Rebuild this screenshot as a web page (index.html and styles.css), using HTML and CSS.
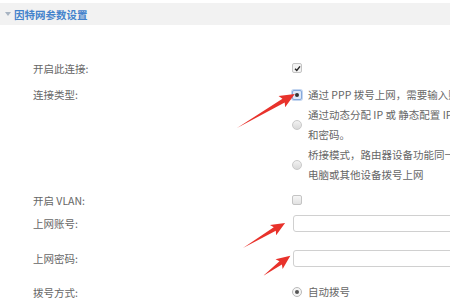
FILE: index.html
```html
<!DOCTYPE html>
<html>
<head>
    <meta charset="UTF-8">
    <title>因特网参数设置</title>
    <link rel="stylesheet" href="styles.css">
</head>
<body>
    <header class="section-head">
        <span class="caret"></span>
        <h2>因特网参数设置</h2>
    </header>
    <div class="form">
        <div class="row r-enable">
            <label class="lbl">开启此连接:</label>
            <div class="ctl">
                <span class="check checked">
                    <svg viewBox="0 0 10 10" width="7" height="7"><path d="M1.5 5.2 L4 7.8 L8.6 2" fill="none" stroke="#222" stroke-width="2"/></svg>
                </span>
            </div>
        </div>
        <div class="row r-type">
            <label class="lbl">连接类型:</label>
            <div class="ctl options">
                <div class="opt">
                    <span class="radio focus"><i></i></span>
                    <span class="opt-text">通过 PPP 拨号上网，需要输入账号和密码。</span>
                </div>
                <div class="opt">
                    <span class="radio"></span>
                    <span class="opt-text">通过动态分配 IP 或 静态配置 IP 地址的方式上网，不需要输入账号<br>和密码。</span>
                </div>
                <div class="opt">
                    <span class="radio"></span>
                    <span class="opt-text">桥接模式，路由器设备功能同一台交换机，需要在<br>电脑或其他设备拨号上网</span>
                </div>
            </div>
        </div>
        <div class="row r-vlan">
            <label class="lbl">开启 VLAN:</label>
            <div class="ctl"><span class="check"></span></div>
        </div>
        <div class="row r-user">
            <label class="lbl">上网账号:</label>
            <div class="ctl"><input class="field" type="text"></div>
        </div>
        <div class="row r-pass">
            <label class="lbl">上网密码:</label>
            <div class="ctl"><input class="field" type="password"></div>
        </div>
        <div class="row r-dial">
            <label class="lbl">拨号方式:</label>
            <div class="ctl opt">
                <span class="radio on"><i></i></span>
                <span class="opt-text">自动拨号</span>
            </div>
        </div>
    </div>
    <!-- annotation arrows drawn over the form -->
    <svg class="marks" width="450" height="300" viewBox="0 0 450 300">
        <g fill="#e8322b">
            <polygon transform="translate(237,128) rotate(-30.4)" points="0,0 54,-2.2 52,-6.5 67,0 52,6.5 54,2.2"/>
            <polygon transform="translate(243,248) rotate(-30.8)" points="0,0 37,-2 35,-6 49,0 35,6 37,2"/>
            <polygon transform="translate(263,276) rotate(-36.5)" points="0,0 22,-2 20,-6 34,0 20,6 22,2"/>
        </g>
    </svg>
</body>
</html>
```

FILE: styles.css
```css
body {
    margin: 0;
    width: 450px;
    height: 300px;
    overflow: hidden;
    position: relative;
    background: #fff;
    color: #666;
    font-family: "Noto Sans CJK SC", sans-serif;
    font-size: 10.5px;
}
.section-head {
    margin-top: 3px;
    height: 22px;
    background: #f2f2f2;
    display: flex;
    align-items: center;
    gap: 3px;
    padding-left: 5px;
}
.caret {
    width: 0;
    height: 0;
    border-left: 3px solid transparent;
    border-right: 3px solid transparent;
    border-top: 4px solid #a8b4c2;
}
h2 {
    margin: 0;
    font-size: 10.5px;
    font-weight: bold;
    color: #4483cc;
}
.form {
    padding-left: 33px;
}
.row {
    display: grid;
    grid-template-columns: 259px 1fr;
    align-items: center;
}
.lbl {
    white-space: nowrap;
}
.r-enable {
    margin-top: 33px;
    height: 20px;
}
.r-type {
    margin-top: 7px;
    align-items: start;
    line-height: 20px;
}
.r-vlan {
    margin-top: 5px;
    height: 20px;
}
.r-user {
    margin-top: 2px;
    height: 23px;
}
.r-pass {
    margin-top: 12px;
    height: 22px;
}
.r-dial {
    margin-top: 13px;
    height: 20px;
}
.ctl {
    display: flex;
    align-items: center;
}
.options {
    flex-direction: column;
    align-items: flex-start;
}
.opt {
    display: flex;
    align-items: center;
    gap: 6px;
    line-height: 20px;
    white-space: nowrap;
}
.check {
    width: 8px;
    height: 8px;
    border: 1px solid #c4c4c4;
    border-radius: 2px;
    background: linear-gradient(#f6f6f6, #e2e2e2);
    display: flex;
    align-items: center;
    justify-content: center;
}
.check.checked {
    background: #f2f2f2;
}
.radio {
    flex: none;
    width: 8px;
    height: 8px;
    border: 1px solid #c9c9c9;
    border-radius: 50%;
    background: linear-gradient(#f2f2f2, #d9d9d9);
    display: flex;
    align-items: center;
    justify-content: center;
}
.radio i {
    width: 4px;
    height: 4px;
    border-radius: 50%;
    background: #333;
}
.radio.focus {
    border-radius: 2px;
    border-color: #86a9dc;
    background: #dfe9f8;
    box-shadow: 0 0 0 1px #c4d6f0;
}
.radio.on {
    background: #f5f5f5;
    border-color: #b9b9b9;
}
.radio.on i {
    background: #555;
}
.field {
    box-sizing: border-box;
    margin: 0 0 0 1px;
    width: 220px;
    height: 100%;
    border: 1px solid #d0d0d0;
    border-radius: 3px;
    background: #fff;
    padding: 0 6px;
}
.marks {
    position: absolute;
    top: 0;
    left: 0;
    pointer-events: none;
}
```
